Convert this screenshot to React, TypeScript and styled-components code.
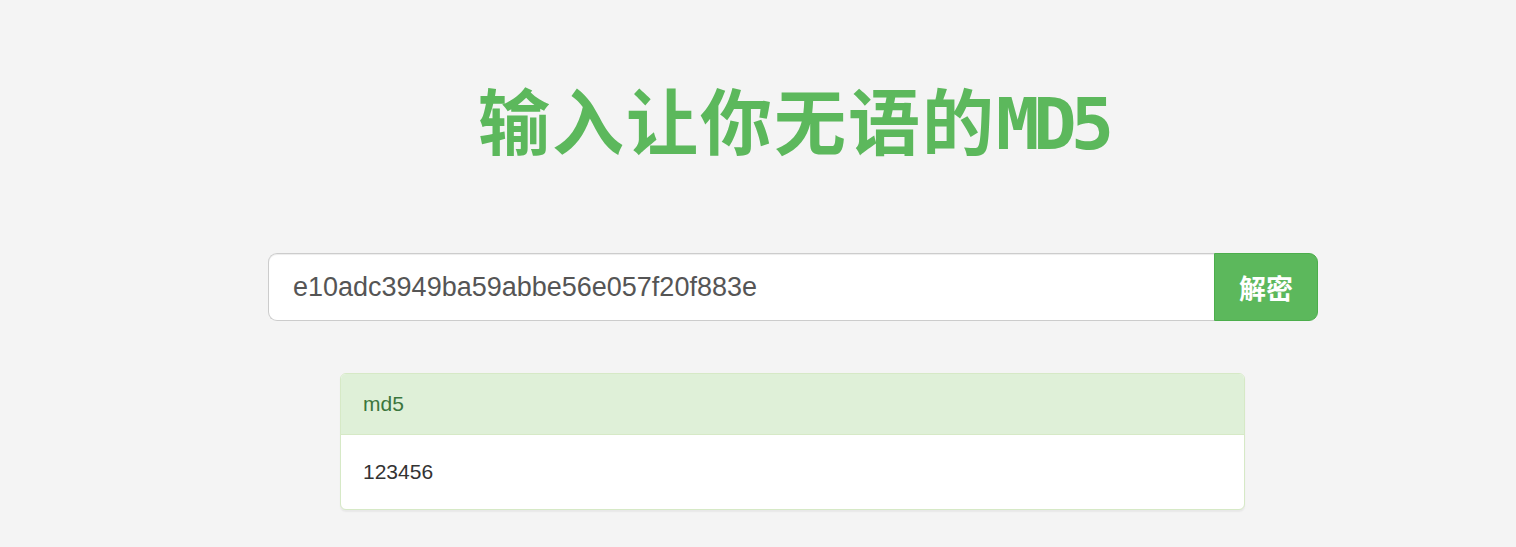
import React from "react";
import styled, { createGlobalStyle } from "styled-components";

const GlobalStyle = createGlobalStyle`
  html, body {
    margin: 0;
    padding: 0;
    background: #f4f4f4;
    font-family: "Liberation Sans", "Noto Sans CJK SC", sans-serif;
  }
  * { box-sizing: border-box; }
`;

const Page = styled.main`
  padding: 78px 198px 36px 268px;
`;

const Title = styled.h1`
  margin: 0 0 89px;
  text-align: center;
  font-family: "Noto Sans CJK SC", sans-serif;
  font-size: 72px;
  line-height: 79px;
  font-weight: 700;
  letter-spacing: 2px;
  color: #5cb85c;
`;

const Latin = styled.span`
  font-family: "DejaVu Sans Mono", monospace;
  letter-spacing: -6px;
`;

const InputGroup = styled.form`
  display: flex;
  height: 68px;
  margin: 0;
`;

const HashInput = styled.input`
  flex: 1;
  min-width: 0;
  height: 100%;
  padding: 0 24px;
  border: 1px solid #ccc;
  border-right: none;
  border-radius: 9px 0 0 9px;
  background: #fff;
  box-shadow: inset 0 1px 1px rgba(0, 0, 0, 0.075);
  font-family: "Liberation Sans", sans-serif;
  font-size: 27px;
  color: #555;
  outline: none;
`;

const DecryptButton = styled.button`
  width: 104px;
  height: 100%;
  border: 1px solid #4cae4c;
  border-radius: 0 9px 9px 0;
  background: #5cb85c;
  color: #fff;
  font-family: "Noto Sans CJK SC", sans-serif;
  font-size: 27px;
  font-weight: 700;
  cursor: pointer;
  padding: 0;
`;

const Panel = styled.section`
  margin: 52px 0 0 72px;
  width: 905px;
  background: #fff;
  border: 1px solid #d6e9c6;
  border-radius: 6px;
  box-shadow: 0 1.5px 1.5px rgba(0, 0, 0, 0.05);
  overflow: hidden;
`;

const PanelHeading = styled.div`
  padding: 15px 22px;
  background: #dff0d8;
  border-bottom: 1px solid #d6e9c6;
  color: #3c763d;
  font-size: 21px;
  line-height: 30px;
`;

const PanelBody = styled.div`
  padding: 22px;
  color: #333;
  font-size: 21px;
  line-height: 30px;
`;

export default function App() {
  return (
    <>
      <GlobalStyle />
      <Page>
        <Title>
          输入让你无语的<Latin>MD5</Latin>
        </Title>
        <InputGroup onSubmit={(e) => e.preventDefault()}>
          <HashInput defaultValue="e10adc3949ba59abbe56e057f20f883e" />
          <DecryptButton type="submit">解密</DecryptButton>
        </InputGroup>
        <Panel>
          <PanelHeading>md5</PanelHeading>
          <PanelBody>123456</PanelBody>
        </Panel>
      </Page>
    </>
  );
}
